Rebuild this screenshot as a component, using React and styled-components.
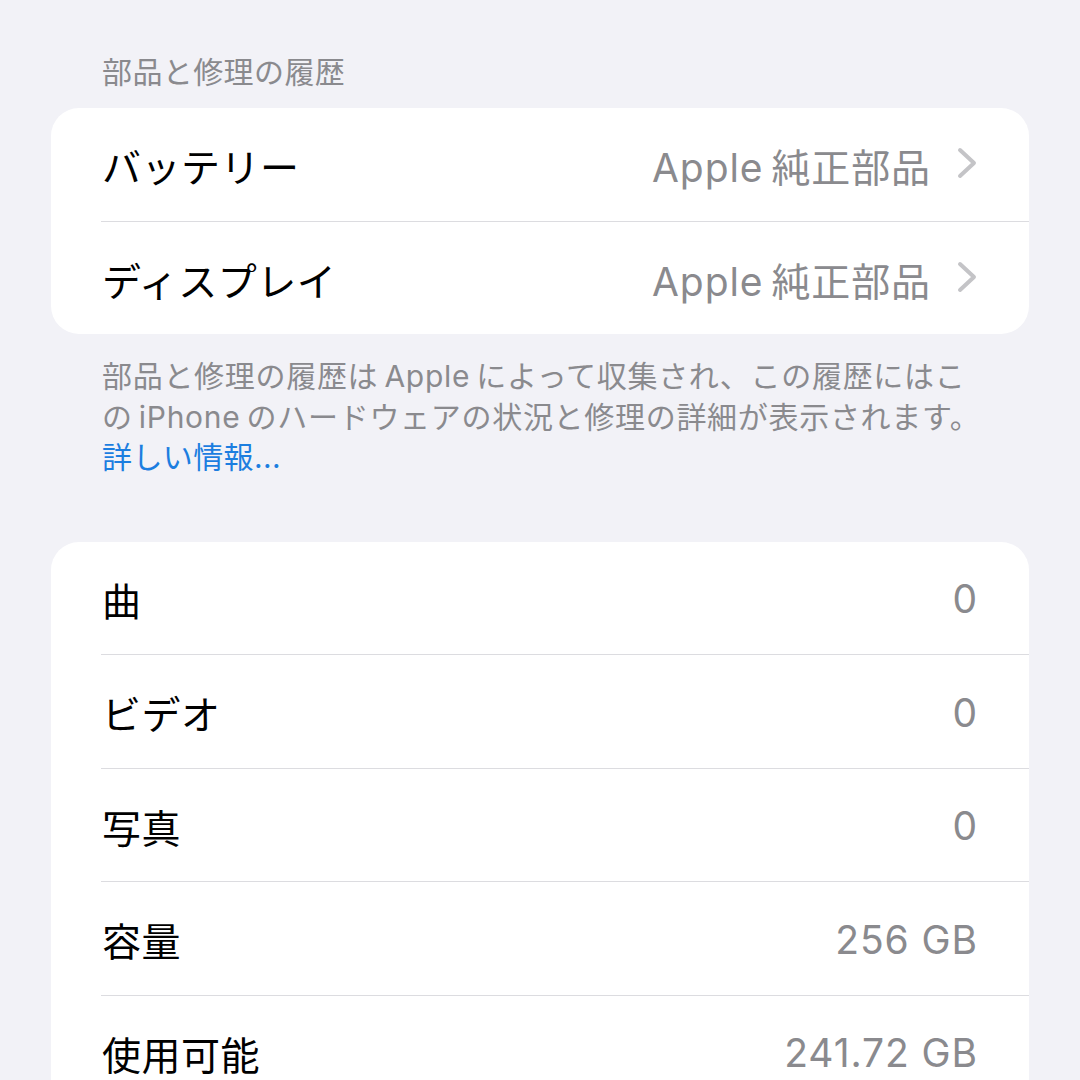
import React from "react";
import styled, { createGlobalStyle } from "styled-components";

const Global = createGlobalStyle`
  html, body {
    margin: 0;
    padding: 0;
    background: #f2f2f7;
  }
  body {
    font-family: Inter, "Noto Sans CJK JP", "Noto Sans", sans-serif;
    -webkit-font-smoothing: antialiased;
  }
`;

const Page = styled.div`
  width: 1080px;
  height: 1080px;
  overflow: hidden;
  background: #f2f2f7;
  padding: 52px 51px 0;
  box-sizing: border-box;
  display: flex;
  flex-direction: column;
`;

const SectionHeader = styled.div`
  padding-left: 51px;
  font-size: 30px;
  line-height: 40px;
  color: #8a8a8e;
  margin-bottom: 16px;
  letter-spacing: 0.4px;
`;

const Card = styled.div`
  background: #ffffff;
  border-radius: 28px;
  overflow: hidden;
  display: flex;
  flex-direction: column;
  flex-shrink: 0;
`;

const Row = styled.div`
  height: 112.5px;
  display: flex;
  align-items: center;
  justify-content: space-between;
  padding-right: 51px;
  border-top: ${(p) => (p.$first ? "none" : "1px solid #dcdce0")};
  margin-left: ${(p) => (p.$first ? "0" : "50px")};
  padding-left: ${(p) => (p.$first ? "51px" : "1px")};
  box-sizing: content-box;
`;

const Label = styled.span`
  font-size: 39px;
  color: #000;
  letter-spacing: 0.5px;
  padding-top: 2px;
`;

const Value = styled.span`
  display: flex;
  align-items: center;
  gap: 26px;
  font-size: 39px;
  color: #8a8a8e;
  padding-top: 2px;
  letter-spacing: 0.9px;
`;

const Chevron = styled.svg`
  width: 20px;
  height: 32px;
  flex-shrink: 0;
  margin-top: -4px;
  margin-right: 1px;
`;

const Footer = styled.div`
  padding-left: 51px;
  margin-top: 22px;
  font-size: 30px;
  line-height: 40.5px;
  color: #8a8a8e;
  white-space: nowrap;
  letter-spacing: 0.7px;
`;

const Link = styled.span`
  color: #1c7ee0;
  letter-spacing: 0.4px;
`;

const Spacer = styled.div`
  height: 64px;
  flex-shrink: 0;
`;

function ChevronIcon() {
  return (
    <Chevron viewBox="0 0 20 32">
      <polyline
        points="3,3 17,16 3,29"
        fill="none"
        stroke="#c4c4c7"
        strokeWidth="4"
        strokeLinecap="round"
        strokeLinejoin="round"
      />
    </Chevron>
  );
}

const parts = [
  { label: "バッテリー", value: "Apple\u2009純正部品" },
  { label: "ディスプレイ", value: "Apple\u2009純正部品" },
];

const stats = [
  { label: "曲", value: "0" },
  { label: "ビデオ", value: "0" },
  { label: "写真", value: "0" },
  { label: "容量", value: "256 GB" },
  { label: "使用可能", value: "241.72 GB" },
];

export default function App() {
  return (
    <>
      <Global />
      <Page>
        <SectionHeader>部品と修理の履歴</SectionHeader>
        <Card>
          {parts.map((p, i) => (
            <Row key={p.label} $first={i === 0}>
              <Label>{p.label}</Label>
              <Value>
                {p.value}
                <ChevronIcon />
              </Value>
            </Row>
          ))}
        </Card>
        <Footer>
          部品と修理の履歴は{"\u2009"}Apple{"\u2009"}によって収集され、この履歴にはこ
          <br />
          の{"\u2009"}iPhone{"\u2009"}のハードウェアの状況と修理の詳細が表示されます。
          <br />
          <Link>詳しい情報...</Link>
        </Footer>
        <Spacer />
        <Card>
          {stats.map((s, i) => (
            <Row key={s.label} $first={i === 0}>
              <Label>{s.label}</Label>
              <Value>{s.value}</Value>
            </Row>
          ))}
        </Card>
      </Page>
    </>
  );
}
